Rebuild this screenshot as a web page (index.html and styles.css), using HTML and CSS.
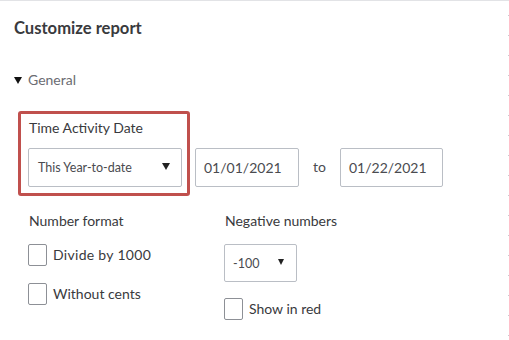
FILE: index.html
```html
<!DOCTYPE html>
<html>
<head>
<meta charset="utf-8">
<link rel="stylesheet" href="styles.css">
</head>
<body>
<div class="page">
  <h1 class="title">Customize report</h1>
  <div class="section-toggle"><span class="caret"></span><span>General</span></div>
  <div class="date-row">
    <div class="highlight">
      <div class="label">Time Activity Date</div>
      <div class="select wide"><span>This Year-to-date</span><span class="arrow"></span></div>
    </div>
    <div class="input date1">01/01/2021</div>
    <div class="to">to</div>
    <div class="input date2">01/22/2021</div>
  </div>
  <div class="options">
    <div class="col left">
      <div class="label">Number format</div>
      <label class="check"><span class="box"></span><span class="wide-text">Divide by 1000</span></label>
      <label class="check"><span class="box"></span><span>Without cents</span></label>
    </div>
    <div class="col right">
      <div class="label">Negative numbers</div>
      <div class="select small"><span>-100</span><span class="arrow sm"></span></div>
      <label class="check"><span class="box"></span><span>Show in red</span></label>
    </div>
  </div>
</div>
</body>
</html>
```
FILE: styles.css
```css
* { box-sizing: border-box; }
html, body { margin: 0; padding: 0; background: #fff; }
body { font-family: Lato, "Open Sans", sans-serif; color: #393a3d; }
.page {
  width: 509px;
  height: 340px;
  border-top: 1px solid #e2e3e6;
  padding: 0 0 0 14px;
  background-image: linear-gradient(to bottom, #c9cacf 1px, transparent 1px);
  background-size: 1px 20px;
  background-repeat: repeat-y;
  background-position: 508px 14px;
  overflow: hidden;
}
.title {
  margin: 0;
  padding-top: 17px;
  font-size: 16.6px;
  line-height: 20px;
  font-weight: 700;
  color: #393a3d;
}
.section-toggle {
  margin-top: 33px;
  display: flex;
  align-items: center;
  font-size: 14px;
  line-height: 18px;
  color: #6b6c72;
}
.caret {
  width: 0; height: 0;
  border-left: 4.5px solid transparent;
  border-right: 4.5px solid transparent;
  border-top: 7px solid #111;
  margin-right: 6px;
}
.date-row {
  margin-top: 22px;
  margin-left: 4px;
  display: flex;
  align-items: flex-end;
}
.highlight {
  width: 172px;
  border: 3px solid #c0504d;
  border-radius: 3px;
  padding: 5px 5px 6px 7px;
}
.label {
  font-size: 14px;
  line-height: 18px;
  color: #393a3d;
}
.highlight .label { margin-left: 1px; margin-bottom: 11px; }
.select, .input {
  border: 1px solid #babec5;
  border-radius: 2px;
  height: 39px;
  display: flex;
  align-items: center;
  color: #4a4b50;
}
.select.wide {
  width: 154px;
  padding: 0 11px 0 9px;
  justify-content: space-between;
  font-size: 12.5px;
}
.arrow {
  width: 0; height: 0;
  border-left: 4.5px solid transparent;
  border-right: 4.5px solid transparent;
  border-top: 7px solid #222;
  margin-top: -2px;
}
.arrow.sm {
  border-left-width: 3.5px;
  border-right-width: 3.5px;
  border-top-width: 6px;
}
.input {
  padding-left: 8px;
  margin-bottom: 9px;
  font-size: 14px;
}
.date1 { margin-left: 5px; width: 104px; }
.to { margin: 0 14px 20px 14px; font-size: 14px; color: #4a4b50; line-height: 18px; }
.date2 { width: 103px; }
.options {
  margin-top: 16px;
  margin-left: 14px;
  display: flex;
}
.col.left { width: 196px; }
.col .label { margin-bottom: 14px; margin-left: 1px; }
.check {
  display: flex;
  align-items: center;
  font-size: 14px;
  line-height: 18px;
  color: #393a3d;
}
.wide-text { letter-spacing: 0.3px; }
.check .box {
  width: 19px;
  height: 22px;
  border: 1px solid #8d9096;
  border-radius: 2px;
  margin-right: 6px;
}
.left .check + .check { margin-top: 17px; }
.select.small {
  width: 73px;
  height: 38px;
  padding: 0 12px 0 8px;
  justify-content: space-between;
  margin-bottom: 16px;
  font-size: 12.5px;
}
```
